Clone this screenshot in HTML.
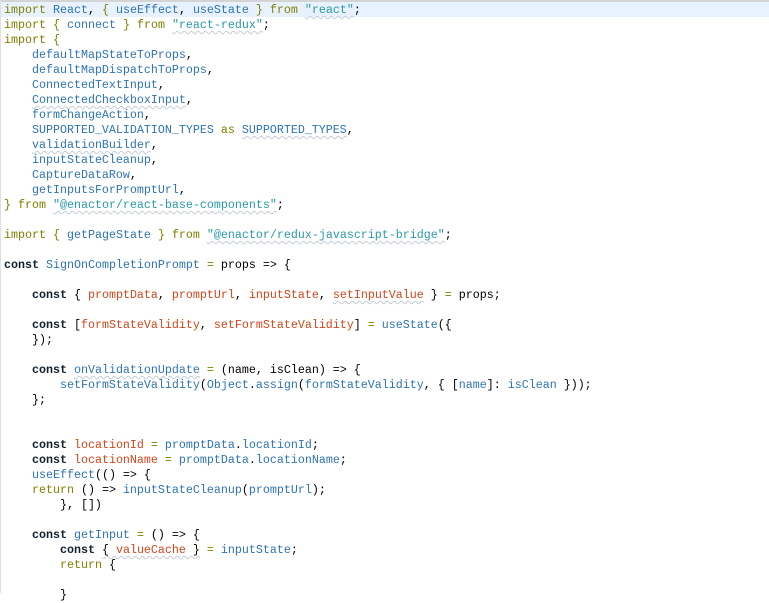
<!DOCTYPE html>
<html><head><meta charset="utf-8"><style>
html,body{margin:0;padding:0;background:#fff;width:769px;height:593px;overflow:hidden}
.top{position:absolute;left:0;top:0;width:769px;height:2px;background:#d4d4d4}
.hl{position:absolute;left:0;top:2px;width:769px;height:15px;background:#e8f2fe}
.lb{position:absolute;left:0;top:0;width:1px;height:593px;background:#e0e0e0}
pre{position:absolute;left:4px;top:3px;margin:0;font-family:"Liberation Mono",monospace;font-size:11.67px;line-height:15px;color:#000;white-space:pre}
.k{color:#7f7f00}
.c{color:#10202e;font-weight:bold}
.i{color:#2e74b5}
.v{color:#d2461a}
.s{color:#2a9aa8}
.w{text-decoration:underline wavy #c3ccd6;text-decoration-thickness:1px;text-underline-offset:2px}
</style></head><body>
<div class="top"></div><div class="hl"></div><div class="lb"></div>
<pre><span class="k">import</span> <span class="i">React</span>, <span class="k">{</span> <span class="i">useEffect</span>, <span class="i">useState</span> <span class="k">}</span> <span class="k">from</span> <span class="s w">"react"</span>;
<span class="k">import</span> <span class="k">{</span> <span class="i">connect</span> <span class="k">}</span> <span class="k">from</span> <span class="s w">"react-redux"</span>;
<span class="k">import</span> <span class="k">{</span>
    <span class="i">defaultMapStateToProps</span>,
    <span class="i">defaultMapDispatchToProps</span>,
    <span class="i">ConnectedTextInput</span>,
    <span class="i w">ConnectedCheckboxInput</span>,
    <span class="i">formChangeAction</span>,
    <span class="i">SUPPORTED_VALIDATION_TYPES</span> <span class="k">as</span> <span class="i w">SUPPORTED_TYPES</span>,
    <span class="i w">validationBuilder</span>,
    <span class="i">inputStateCleanup</span>,
    <span class="i">CaptureDataRow</span>,
    <span class="i">getInputsForPromptUrl</span>,
<span class="k">}</span> <span class="k">from</span> <span class="s w">"@enactor/react-base-components"</span>;

<span class="k">import</span> <span class="k">{</span> <span class="i">getPageState</span> <span class="k">}</span> <span class="k">from</span> <span class="s w">"@enactor/redux-javascript-bridge"</span>;

<span class="c">const</span> <span class="i">SignOnCompletionPrompt</span> <span class="k">=</span> props =&gt; {

    <span class="c">const</span> { <span class="v">promptData</span>, <span class="v">promptUrl</span>, <span class="v">inputState</span>, <span class="v w">setInputValue</span> } <span class="k">=</span> props;

    <span class="c">const</span> [<span class="v">formStateValidity</span>, <span class="v">setFormStateValidity</span>] <span class="k">=</span> <span class="i">useState</span>({
    });

    <span class="c">const</span> <span class="i w">onValidationUpdate</span> <span class="k">=</span> (name, isClean) =&gt; {
        <span class="i">setFormStateValidity</span>(<span class="i">Object</span>.<span class="i">assign</span>(<span class="i">formStateValidity</span>, { [<span class="i">name</span>]: <span class="i">isClean</span> }));
    };


    <span class="c">const</span> <span class="v">locationId</span> <span class="k">=</span> <span class="i">promptData</span>.<span class="i">locationId</span>;
    <span class="c">const</span> <span class="v">locationName</span> <span class="k">=</span> <span class="i">promptData</span>.<span class="i">locationName</span>;
    <span class="i">useEffect</span>(() =&gt; {
    <span class="k">return</span> () =&gt; <span class="i">inputStateCleanup</span>(<span class="i">promptUrl</span>);
        }, [])

    <span class="c">const</span> <span class="i">getInput</span> <span class="k">=</span> () =&gt; {
        <span class="c">const</span> <span class="w">{ <span class="v">valueCache</span> }</span> <span class="k">=</span> <span class="i">inputState</span>;
        <span class="k">return</span> {

        }</pre>
</body></html>
